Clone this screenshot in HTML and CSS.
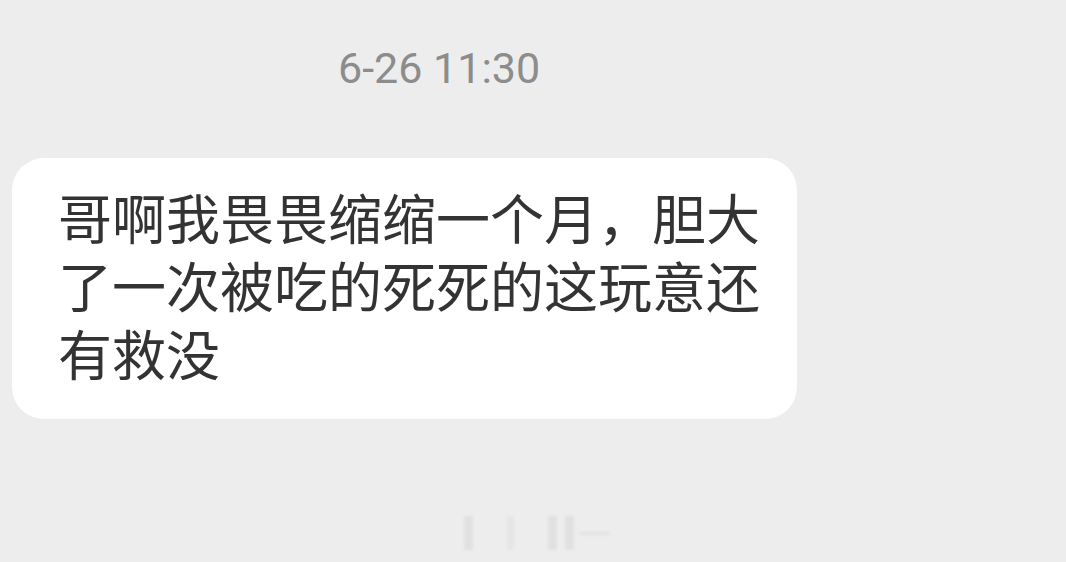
FILE: index.html
```html
<!DOCTYPE html>
<html lang="zh-CN">
<head>
  <meta charset="UTF-8">
  <meta name="viewport" content="width=device-width, initial-scale=1.0">
  <title>消息</title>
  <link rel="stylesheet" href="styles.css">
</head>
<body>
  <div class="chat">
    <div class="time">6-26 11:30</div>
    <div class="bubble">哥啊我畏畏缩缩一个月，胆大了一次被吃的死死的这玩意还有救没</div>
    <div class="mark">
      <span class="bar b1"></span>
      <span class="bar b2"></span>
      <span class="bar b3"></span>
      <span class="bar b4"></span>
      <span class="line"></span>
    </div>
  </div>
</body>
</html>
```

FILE: styles.css
```css
body { margin: 0; background: #ededed; font-family: "Roboto", "Noto Sans CJK SC", sans-serif; }
.chat { height: 562px; overflow: hidden; display: flex; flex-direction: column; }
.time { padding: 44px 0 0 338px; font-size: 43px; line-height: 49px; color: #8c8c8c; }
.bubble { margin: 65px 0 0 12px; width: 702px; padding: 25px 37px 32px 46px; background: #fff; border-radius: 32px; font-family: "Noto Sans CJK SC", sans-serif; font-size: 54px; line-height: 68px; color: #333; }
.mark { margin: 96px 0 0 464px; display: flex; align-items: center; gap: 34px; height: 36px; filter: blur(1.5px); opacity: 0.4; }
.bar { width: 9px; height: 34px; background: #cfcfcf; }
.b2 { width: 7px; background: #dadada; }
.b3 { margin-right: -26px; }
.b4 { margin-right: -28px; }
.line { width: 30px; height: 3px; background: #d0d0d0; }
```
